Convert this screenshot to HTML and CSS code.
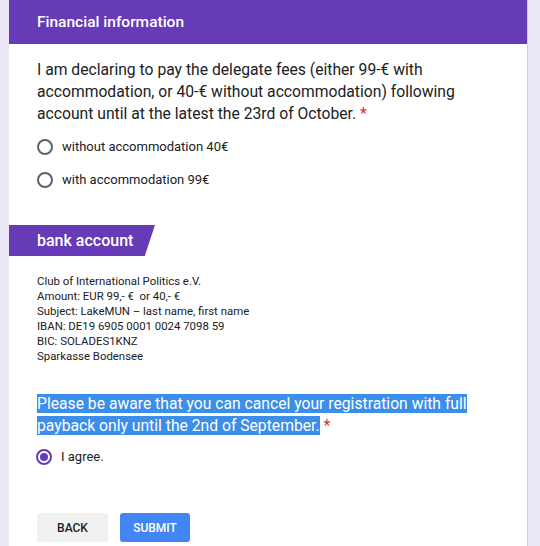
FILE: index.html
```html
<!DOCTYPE html>
<html>
<head>
<meta charset="utf-8">
<link rel="stylesheet" href="styles.css">
</head>
<body>
<div class="card">
  <div class="header">Financial information</div>
  <div class="question">
    <div class="qtext">I am declaring to pay the delegate fees (either 99-€ with accommodation, or 40-€ without accommodation) following account until at the latest the 23rd of October. <span class="req">*</span></div>
    <div class="options">
      <div class="opt"><span class="radio"></span><span>without accommodation 40€</span></div>
      <div class="opt"><span class="radio"></span><span>with accommodation 99€</span></div>
    </div>
  </div>
  <div class="tab">bank account</div>
  <div class="bank">
    Club of International Politics e.V.<br>
    Amount: EUR 99,- €&nbsp; or 40,- €<br>
    Subject: LakeMUN – last name, first name<br>
    IBAN: DE19 6905 0001 0024 7098 59<br>
    BIC: SOLADES1KNZ<br>
    Sparkasse Bodensee
  </div>
  <div class="question q2">
    <div class="qtext"><span class="sel">Please be aware that you can cancel your registration with full payback only until the 2nd of September.</span> <span class="req">*</span></div>
    <div class="opt agree"><span class="radio on"></span><span>I agree.</span></div>
  </div>
  <div class="buttons">
    <button class="btn back">BACK</button>
    <button class="btn submit">SUBMIT</button>
  </div>
</div>
</body>
</html>
```
FILE: styles.css
```css
html, body {
  margin: 0;
  padding: 0;
  background: #ebe7f5;
  font-family: Roboto, "Liberation Sans", sans-serif;
  color: #202124;
  overflow: hidden;
}
.card {
  margin-left: 9px;
  width: 519px;
  height: 560px;
  background: #fff;
  border-right: 1px solid #cfcfd6;
  box-sizing: border-box;
}
.header {
  background: #673ab7;
  color: #fff;
  font-weight: 500;
  font-size: 15.5px;
  height: 44px;
  box-sizing: border-box;
  padding: 13px 0 0 28px;
}
.question {
  padding: 15px 30px 0 28px;
}
.qtext {
  font-size: 15.7px;
  line-height: 22px;
}
.req {
  color: #d93025;
}
.options {
  margin-top: 5px;
}
.opt {
  display: flex;
  align-items: center;
  gap: 9px;
  height: 33px;
  font-size: 13px;
}
.radio {
  width: 16px;
  height: 16px;
  border: 2px solid #5f6368;
  border-radius: 50%;
  box-sizing: border-box;
  flex: none;
}
.radio.on {
  border-color: #673ab7;
  position: relative;
}
.radio.on::after {
  content: "";
  position: absolute;
  left: 2px;
  top: 2px;
  width: 8px;
  height: 8px;
  border-radius: 50%;
  background: #673ab7;
}
.tab {
  margin-top: 29px;
  width: 146px;
  height: 31px;
  background: #673ab7;
  color: #fff;
  font-weight: 500;
  font-size: 16px;
  box-sizing: border-box;
  padding: 6px 0 0 28px;
  clip-path: polygon(0 0, 100% 0, 93% 100%, 0 100%);
}
.bank {
  padding: 18px 0 0 28px;
  font-size: 11.4px;
  line-height: 15px;
}
.q2 {
  padding-top: 29px;
}
.sel {
  background: #3b8eea;
  color: #fff;
}
.agree {
  margin-top: 3px;
  margin-left: -1px;
}
.buttons {
  display: flex;
  gap: 12px;
  padding: 40px 0 0 28px;
}
.btn {
  height: 29px;
  border: none;
  border-radius: 3px;
  font-family: Roboto, "Liberation Sans", sans-serif;
  font-weight: 500;
  font-size: 12px;
  padding: 0;
}
.back {
  width: 71px;
  background: #f1f1f1;
  color: #202124;
}
.submit {
  width: 70px;
  background: #4285f4;
  color: #fff;
}
```
